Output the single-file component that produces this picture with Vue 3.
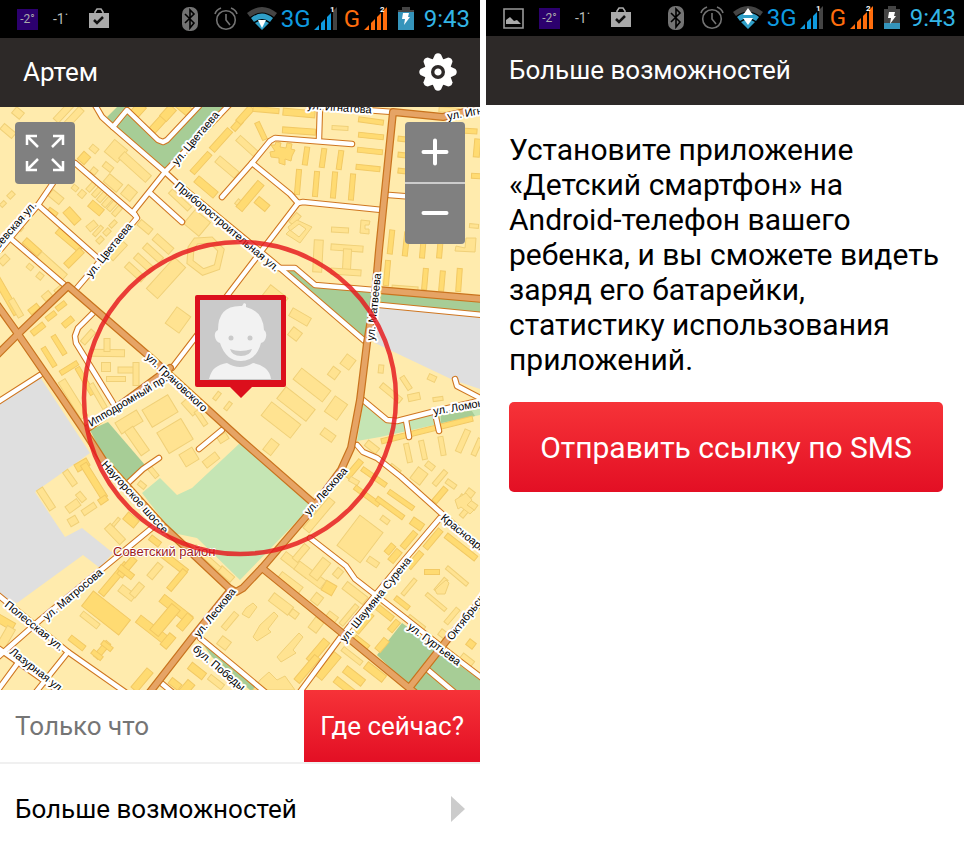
<template>
  <main class="screens">
    <section v-for="screen in screens" :key="screen.id" :id="screen.id" class="screen">
      <!-- status bar -->
      <div class="status" :class="{ tall: screen.id === 'map' }">
        <div class="notices">
          <span v-if="screen.id === 'more'" class="slot"><svg width="21" height="21" viewBox="0 0 21 21"><path d="M1 1h19v19H1z" fill="none" stroke="#999" stroke-width="1.600" /><path d="M3 16v-4l4-3 4 4 3-1 4 4z" fill="#aaa" /></svg></span>
          <span class="slot"><span class="temp">-2°</span></span>
          <span class="slot minus">-1˙</span>
          <span class="slot">
            <svg width="20" height="22" viewBox="0 0 20 22"><path d="M6 5V4l2-3h4l2 3v1" fill="none" stroke="#aaa" stroke-width="1.600" /><path d="M0 5h20v15H0z" fill="#aaa" /><path d="M5 12l3 3 6-6" fill="none" stroke="#111" stroke-width="2.500" /></svg>
          </span>
        </div>
        <div class="system">
          <svg width="16" height="24" viewBox="0 0 16 24"><rect width="16" height="24" rx="7" fill="#737373" /><path d="M3 7l9 9-4 5V3l4 4-9 9" fill="none" stroke="#000" stroke-width="1.600" /></svg>
          <svg class="alarm" width="24" height="24" viewBox="0 0 24 24" fill="none" stroke="#737373" stroke-width="1.600"><circle cx="12" cy="13" r="9.300" /><path d="M12 7v6l4 5M1 7q1-4 6-6M23 7q-1-4-6-6" /></svg>
          <svg class="wifi" width="30" height="24" viewBox="0 0 30 24">
            <path d="M0 6Q15-6 30 6l-3 4Q15 1 3 10z" fill="#444" />
            <path d="M4 11q11-9 22 0l-3 4q-8-6-16 0zM8 16q7-5 14 0l-7 7z" fill="#2f9fc8" />
            <path v-if="screen.id === 'more'" d="M15 2l5 7H10zM10 12h10l-5 7z" fill="#fff" />
            <path v-else d="M11 13h8l-4 8z" fill="#fff" />
          </svg>
          <span class="network blue">3G</span>
          <svg class="signal" width="24" height="24" viewBox="0 0 24 24"><path d="M0 23l5-5v5zM7 16l4-4v11H7zM13 10l4-4v17h-4z" fill="#0f9be0" /><path d="M19 4l4-4v23h-4z" fill="#444" /><text x="16" y="5">1</text></svg>
          <span class="network orange">G</span>
          <svg class="signal" width="24" height="24" viewBox="0 0 24 24"><path d="M0 23l5-5v5zM7 16l4-4v11H7zM13 10l4-4v17h-4zM19 4l4-4v23h-4z" fill="#ff6d0d" /><text x="16" y="5">2</text></svg>
          <svg class="battery" width="16" height="24" viewBox="0 0 16 24"><path d="M4 0h8v3h4v20H0V3h4z" fill="#444" /><path :d="screen.id === 'more' ? 'M0 17h16v6H0z' : 'M0 5h16v18H0z'" fill="#3594bb" /><path d="M5 6h6l-1 4h2l-6 8 1-6H4z" fill="#fff" /></svg>
          <time>9:43</time>
        </div>
      </div>

      <header class="title-bar">
        <h1>{{ screen.title }}</h1>
        <button v-if="screen.id === 'map'" class="gear" type="button" aria-label="Настройки">
          <svg width="38" height="38" viewBox="-19 -19 38 38">
            <g fill="#fff">
              <circle r="13.500" />
              <path v-for="n in 8" :key="n" d="M-6-11L-3-17.500Q0-20 3-17.500L6-11z" :transform="`rotate(${n * 45})`" />
            </g>
            <circle r="5.300" fill="#fff" stroke="#2d2928" stroke-width="3.400" />
          </svg>
        </button>
      </header>

      <!-- map screen -->
      <template v-if="screen.id === 'map'">
        <div class="map">
          <svg class="map-canvas" viewBox="0 107 480 583" preserveAspectRatio="xMidYMid slice">
            <rect y="107" width="480" height="583" fill="#ffebad" />
            <polygon v-for="(a, i) in areas" :key="'a' + i" :points="a[1]" :fill="a[0]" />
            <g stroke-width="1">
              <rect v-for="(b, i) in buildings" :key="'b' + i" :x="b[0] - b[2] / 2" :y="b[1] - b[3] / 2" :width="b[2]" :height="b[3]" :transform="`rotate(${b[4]} ${b[0]} ${b[1]})`" :fill="b[5] ? '#ffdb72' : '#ffe391'" :stroke="b[5] ? '#f2c964' : '#f0d078'" />
              <polygon v-for="(p, i) in blocks" :key="'p' + i" :points="p[1]" :fill="p[0] ? '#ffdb72' : '#ffe391'" :stroke="p[0] ? '#f2c964' : '#f0d078'" />
              <polygon points="196,241 211,240 221,250 217,267 203,272 190,262 191,248" fill="none" stroke="#f0d078" stroke-width="7" />
              <polygon points="196,241 211,240 221,250 217,267 203,272 190,262 191,248" fill="none" stroke="#ffe391" stroke-width="5" />
            </g>
            <g fill="none" stroke-linecap="round" stroke-linejoin="round">
              <polyline v-for="(r, i) in streets" :key="'s' + i" :points="r" stroke="#cf7620" stroke-width="6.500" />
              <polyline v-for="(r, i) in streets" :key="'w' + i" :points="r" stroke="#fff" stroke-width="4.400" />
              <polyline v-for="(r, i) in avenues" :key="'c' + i" :points="r" stroke="#c9731d" stroke-width="8" />
              <polyline v-for="(r, i) in avenues" :key="'o' + i" :points="r" stroke="#e6a465" stroke-width="5.600" />
            </g>
            <g class="street-names">
              <text v-for="(t, i) in labels" :key="'t' + i" :transform="`translate(${t[1]} ${t[2]}) rotate(${t[3]})`">{{ t[0] }}</text>
              <text class="district" x="113" y="556">Советский район</text>
            </g>
            <circle cx="240" cy="398" r="156" fill="none" stroke="#e6191e" stroke-opacity=".83" stroke-width="4.500" />
            <!-- child marker -->
            <path d="M197 295h87q2 0 2 2v88q0 2-2 2h-32l-11 11-11-11h-33q-2 0-2-2v-88q0-2 2-2z" fill="#dc0f1c" />
            <path d="M200 300h81v80h-81z" fill="#cacaca" />
            <path d="M209 379q2-8 6-11 5-4 12-5 13 8 26 0 7 1 12 5 5 4 6 11z" fill="#f2f2f2" />
            <path d="M218 330q0-24 22-24h2l2-3 2 1v3q17 4 18 23 3 2 2 7-1 5-5 6-5 18-20 18t-21-18q-4-1-5-6-1-5 3-7z" fill="#f2f2f2" />
            <circle cx="231" cy="338" r="2.500" fill="#cacaca" />
            <circle cx="250" cy="338" r="2.500" fill="#cacaca" />
            <path d="M230 349q10 4 22 0-2 7-11 7t-11-7z" fill="#cacaca" />
          </svg>
          <button class="map-button expand" type="button" aria-label="Во весь экран">
            <svg width="40" height="40" viewBox="0 0 40 40" fill="none" stroke="#fff" stroke-width="2.500"><path d="M2 12V3h10M3 4l10 10M28 3h10v9M37 4L27 14M2 28v9h10M3 36l10-10M28 37h10v-9M37 36L27 26" /></svg>
          </button>
          <div class="zoom">
            <button class="map-button" type="button" aria-label="Приблизить"><svg width="28" height="28" viewBox="0 0 28 28"><path d="M2.500 14h23M14 2.500v23" stroke="#fff" stroke-width="4" stroke-linecap="round" /></svg></button>
            <button class="map-button" type="button" aria-label="Отдалить"><svg width="28" height="28" viewBox="0 0 28 28"><path d="M2.500 13h23" stroke="#fff" stroke-width="4" stroke-linecap="round" /></svg></button>
          </div>
        </div>

        <div class="locate">
          <span>Только что</span>
          <button class="red" type="button">Где сейчас?</button>
        </div>
        <a class="more-link" href="#more">
          <span>Больше возможностей</span>
          <svg width="14" height="26" viewBox="0 0 14 26"><path d="M0 0l14 13L0 26z" fill="#ccc" /></svg>
        </a>
      </template>

      <!-- promo screen -->
      <div v-else class="promo">
        <p>Установите приложение «Детский смартфон» на Android-телефон вашего ребенка, и вы сможете видеть заряд его батарейки, статистику использования приложений.</p>
        <button class="red send" type="button">Отправить ссылку по SMS</button>
      </div>
    </section>
  </main>
</template>

<script setup>
const screens = [
  { id: 'map', title: 'Артем' },
  { id: 'more', title: 'Больше возможностей' },
]

const gray = '#dfdfdf'
const park = '#a7cd96'
const lawn = '#c5e5b4'

// parks, lawns and industrial zones
const areas = [
  [gray, '0,402 40,377 90,453 35,492 65,537 82,528 113,553 100,568 83,555 17,603 0,595'],
  [gray, '379,306 480,313 480,389 453,380 375,343'],
  [park, '107,117 117,107 127,107 127,112 163,142 197,107 223,107 165,169 113,127'],
  [park, '278,270 295,270 313,287 378,291 368,343'],
  [park, '377,291 480,301 480,313 379,305'],
  [lawn, '240,443 192,488 177,495 160,478 142,493 173,533 197,538 240,580 303,515 310,500'],
  [lawn, '363,403 390,422 440,412 480,402 480,415 380,437 357,441'],
  [park, '441,415 470,408 475,416 441,423'],
  [park, '108,422 145,465 125,483 105,460 90,430'],
  [park, '402,623 480,680 480,690 413,690 377,655'],
  [park, '200,640 240,671 263,690 250,690 212,657'],
]

// cx, cy, width, height, angle, dark
const buildings = [
  [18, 113, 10, 8, 40, 0], [8, 131, 15, 7, 40, 0], [64, 112, 24, 7, -47, 0], [72, 119, 28, 7, -47, 0],
  [116, 151, 17, 16, 40, 0], [135, 167, 36, 9, 42, 0], [84, 158, 10, 9, -48, 1], [94, 149, 8, 6, 40, 0],
  [108, 167, 10, 6, 38, 0], [94, 171, 6, 6, 40, 0], [113, 183, 17, 10, 40, 0], [129, 193, 12, 12, 40, 0],
  [11, 195, 7, 5, -45, 0], [3, 204, 6, 4, -45, 0], [56, 197, 14, 8, 40, 0], [82, 194, 6, 7, 40, 0],
  [75, 188, 6, 5, 40, 0], [52, 213, 10, 7, 35, 1], [72, 216, 17, 9, 48, 1], [96, 208, 15, 8, 40, 1],
  [91, 187, 10, 5, -48, 0], [97, 192, 11, 5, -48, 0], [102, 197, 11, 5, -48, 0], [107, 202, 11, 5, -48, 0], [112, 206, 11, 5, -48, 0], [117, 211, 11, 5, -48, 0],
  [92, 226, 10, 7, -40, 0], [98, 231, 12, 4, -48, 0], [113, 224, 8, 4, -45, 0], [107, 232, 7, 5, -45, 0], [100, 240, 7, 5, -45, 0],
  [31, 211, 6, 5, 40, 0], [24, 221, 6, 5, 40, 0], [20, 228, 6, 5, 40, 0], [4, 260, 10, 7, -45, 0],
  [32, 247, 20, 7, 42, 1], [52, 266, 34, 8, 42, 0], [69, 240, 30, 7, 40, 1], [74, 258, 22, 7, -45, 1],
  [30, 267, 6, 5, 40, 0], [40, 276, 6, 6, 40, 0], [6, 295, 44, 7, 60, 1], [47, 296, 9, 7, -40, 0],
  [60, 290, 10, 7, -40, 0], [145, 227, 15, 7, 40, 0], [118, 251, 21, 6, -47, 0], [163, 244, 22, 8, 42, 0],
  [153, 253, 22, 7, 42, 0], [144, 263, 22, 7, 42, 0], [135, 272, 22, 7, 42, 0], [166, 278, 42, 15, -48, 0],
  [180, 200, 26, 6, 43, 0], [197, 223, 20, 18, 40, 0], [201, 163, 26, 6, -48, 1], [221, 140, 27, 7, -48, 1],
  [227, 167, 25, 8, 40, 0], [206, 187, 25, 8, 40, 1], [237, 125, 12, 6, -48, 1], [240, 204, 9, 6, 40, 0],
  [138, 110, 14, 10, -48, 1], [159, 123, 20, 8, -48, 1], [168, 113, 15, 9, -48, 1], [184, 108, 15, 9, 40, 1],
  [245, 115, 20, 7, -48, 1], [266, 110, 26, 5, 5, 1], [299, 113, 32, 7, 5, 1], [299, 131, 33, 6, 4, 1],
  [340, 128, 16, 4, 3, 0], [261, 131, 19, 5, 65, 1], [247, 146, 24, 7, 42, 0], [371, 121, 25, 5, 8, 1],
  [371, 136, 25, 5, 6, 1], [370, 151, 25, 5, 6, 1], [368, 168, 24, 5, 6, 1], [306, 156, 18, 5, -82, 1],
  [323, 158, 19, 5, -82, 1], [340, 160, 19, 5, -82, 1], [298, 182, 25, 5, -85, 1], [316, 184, 25, 5, -85, 1],
  [334, 185, 26, 5, -85, 1], [352, 187, 26, 5, -85, 1], [402, 139, 8, 5, 6, 1], [402, 155, 8, 5, 6, 1], [402, 171, 8, 5, 6, 1],
  [250, 196, 34, 8, -50, 1], [262, 204, 14, 8, 40, 1], [340, 230, 17, 5, 3, 0], [295, 219, 12, 6, -50, 0],
  [318, 256, 9, 32, 3, 0], [347, 248, 32, 6, 4, 0], [347, 260, 8, 22, 3, 0], [346, 272, 30, 6, 4, 0],
  [391, 242, 24, 5, -84, 1], [406, 244, 24, 5, -84, 1], [423, 246, 24, 5, -85, 1], [440, 247, 22, 5, -85, 1],
  [387, 273, 25, 5, -85, 1], [425, 279, 21, 5, -85, 1], [442, 281, 20, 5, -85, 1], [459, 280, 23, 5, -86, 1],
  [405, 288, 26, 4, 4, 0], [469, 131, 16, 5, 4, 1], [477, 148, 6, 18, 5, 1], [476, 176, 9, 5, 3, 1], [474, 226, 9, 4, 5, 0],
  [449, 110, 20, 5, 5, 0], [275, 297, 22, 14, 38, 0],
  [16, 308, 20, 6, 60, 0], [34, 309, 11, 6, -38, 1], [51, 316, 11, 5, -38, 1], [38, 329, 15, 6, -38, 1],
  [61, 306, 11, 5, -38, 1], [68, 322, 12, 6, -40, 1], [88, 337, 16, 6, -48, 0], [49, 357, 22, 5, 58, 1],
  [59, 345, 22, 5, 58, 1], [69, 368, 20, 5, -32, 1], [85, 381, 31, 5, 60, 1], [73, 399, 43, 8, 58, 0],
  [98, 396, 28, 5, 60, 0], [108, 353, 33, 7, 1, 0], [107, 345, 6, 13, 0, 0], [106, 367, 9, 9, 0, 0],
  [128, 370, 20, 6, 0, 0], [136, 374, 6, 23, 0, 0], [116, 379, 19, 5, 0, 0], [178, 320, 17, 20, 36, 0],
  [160, 411, 30, 20, -31, 0], [175, 436, 28, 24, -31, 0], [189, 457, 15, 14, -31, 0], [190, 407, 17, 8, 48, 0],
  [217, 396, 9, 4, -52, 0], [228, 406, 9, 4, -52, 0], [201, 418, 17, 5, 56, 0], [211, 460, 16, 8, -38, 0], [223, 438, 10, 7, -32, 0],
  [129, 422, 25, 13, -31, 0], [137, 441, 29, 10, 55, 0], [153, 472, 13, 5, 50, 0], [142, 485, 8, 5, 40, 0],
  [82, 465, 14, 8, -30, 1], [94, 481, 40, 7, 58, 1], [70, 478, 17, 6, 55, 0], [46, 499, 24, 7, 57, 0],
  [81, 497, 10, 6, 50, 0], [73, 506, 14, 8, -36, 0], [89, 509, 15, 6, -34, 0], [73, 521, 9, 8, -30, 0],
  [103, 500, 9, 6, -34, 1], [131, 520, 14, 9, 40, 1], [115, 534, 22, 8, 46, 0], [116, 522, 10, 3, -50, 0],
  [300, 317, 21, 9, 30, 0], [295, 334, 11, 10, 38, 0], [312, 385, 37, 14, 38, 0], [296, 404, 37, 15, 38, 0],
  [281, 420, 37, 17, 38, 0], [348, 362, 11, 12, 37, 0], [334, 373, 9, 10, 37, 0], [336, 408, 15, 19, 35, 0],
  [328, 435, 14, 8, 36, 0], [271, 447, 10, 14, 38, 0], [381, 369, 5, 8, 6, 0], [406, 383, 15, 5, 57, 0],
  [391, 393, 25, 6, 39, 0], [414, 397, 12, 7, -12, 0], [432, 378, 8, 6, 25, 0], [438, 399, 10, 4, -8, 0],
  [427, 430, 94, 5, -14, 1], [408, 453, 19, 5, 78, 0], [423, 450, 19, 5, 78, 0],
  [442, 446, 19, 5, 80, 0], [463, 441, 24, 6, -66, 0], [477, 447, 18, 5, -66, 0], [372, 447, 14, 7, 38, 0],
  [374, 477, 29, 5, 35, 1], [354, 469, 22, 6, -50, 1], [354, 481, 10, 5, 30, 0], [419, 476, 12, 14, 37, 0],
  [430, 466, 9, 6, 38, 0], [440, 478, 18, 5, -50, 0], [451, 484, 11, 5, 36, 0], [440, 495, 18, 6, -50, 1],
  [395, 469, 12, 5, 38, 0], [401, 500, 30, 5, 35, 1], [367, 496, 30, 5, 36, 1], [390, 508, 33, 5, 36, 1],
  [470, 493, 8, 7, 38, 0], [468, 502, 20, 6, 36, 0], [465, 512, 12, 5, -50, 0],
  [319, 515, 40, 8, -50, 0], [360, 539, 29, 38, 37, 0], [385, 520, 9, 5, 37, 0], [417, 524, 13, 8, 35, 1],
  [390, 549, 11, 6, -50, 1], [395, 556, 14, 7, -50, 1], [373, 562, 12, 6, 35, 0], [409, 540, 20, 6, -50, 1],
  [433, 539, 24, 6, -50, 1], [415, 560, 20, 6, -50, 1], [432, 572, 15, 5, 0, 1], [457, 576, 27, 4, 40, 0],
  [409, 587, 20, 4, -50, 0], [436, 602, 25, 4, 40, 0], [441, 585, 16, 5, -50, 0], [461, 547, 38, 6, 38, 1],
  [329, 588, 12, 11, 30, 1], [338, 573, 9, 7, -50, 0], [355, 593, 26, 9, 38, 0], [317, 599, 9, 10, 38, 0],
  [296, 565, 32, 9, 38, 0], [310, 575, 33, 10, 37, 0], [320, 569, 10, 22, 38, 0], [301, 553, 19, 7, -50, 0],
  [290, 583, 26, 9, 37, 0], [281, 604, 24, 10, 37, 0], [294, 614, 8, 7, 37, 0], [316, 625, 10, 13, 37, 0],
  [332, 617, 11, 7, 37, 0], [349, 615, 25, 5, -50, 0], [364, 623, 24, 6, -50, 1], [361, 643, 17, 7, 38, 1],
  [382, 645, 14, 7, -50, 1], [394, 626, 13, 6, -50, 1], [402, 603, 17, 5, 38, 1], [385, 613, 19, 6, 38, 1],
  [416, 623, 20, 6, 38, 0], [452, 616, 19, 5, -50, 0], [443, 634, 8, 7, 38, 0], [471, 644, 8, 7, 38, 1],
  [467, 660, 14, 7, 38, 0], [318, 651, 27, 8, -50, 1], [307, 669, 32, 7, -50, 1], [328, 666, 30, 9, -50, 1],
  [354, 676, 23, 8, 38, 1], [375, 672, 23, 8, 38, 1], [344, 686, 22, 7, 38, 1], [352, 656, 24, 5, 38, 0],
  [106, 613, 47, 19, 38, 1], [90, 620, 21, 6, 38, 0], [114, 579, 40, 7, -50, 1], [127, 567, 23, 7, -50, 1],
  [126, 572, 17, 6, 38, 1], [127, 593, 17, 8, 38, 0], [137, 590, 15, 7, -50, 0], [155, 571, 17, 7, -50, 0],
  [173, 562, 34, 7, 38, 1], [177, 580, 25, 6, -50, 1], [155, 541, 12, 6, 38, 1],
  [154, 631, 40, 9, 38, 1], [176, 609, 36, 9, 38, 1], [165, 620, 34, 11, -50, 1], [185, 622, 17, 8, -50, 1],
  [168, 641, 15, 8, -50, 1], [77, 643, 18, 6, 38, 1], [102, 650, 20, 6, -50, 1], [97, 655, 12, 5, 38, 1],
  [107, 646, 12, 5, 38, 1], [142, 680, 25, 8, -50, 1], [230, 621, 20, 6, -50, 0], [224, 643, 11, 10, 38, 0],
  [197, 671, 18, 8, 38, 1], [216, 682, 17, 6, 38, 0], [175, 684, 12, 7, 38, 1], [185, 690, 20, 9, -50, 1],
  [5, 622, 20, 8, 30, 1], [5, 639, 26, 9, -60, 0], [226, 574, 17, 7, 42, 0], [207, 558, 34, 5, 42, 0],
]

const blocks = [
  [1, '271,145 275,145 276,142 281,143 280,147 286,148 287,143 292,144 291,149 295,150 292,156 291,161 285,159 285,165 279,163 279,158 271,157 270,152 275,151'],
  [0, '288,227 297,220 312,227 300,243 286,234 290,230 299,237 306,229 299,224 290,231'],
  [0, '361,220 370,221 369,225 365,225 365,229 369,229 369,234 360,233'],
  [0, '456,246 465,248 466,238 476,238 475,252 455,251'],
  [0, '246,608 253,603 257,607 249,618 242,614'],
  [0, '260,625 274,612 278,616 268,629 271,632 257,641 253,637'],
  [0, '285,648 299,633 303,637 293,650 296,653 281,662 277,657'],
  [0, '260,680 269,672 277,680 285,676 295,690 253,690'],
  [0, '455,500 466,493 472,500 467,505 474,510 470,514 461,507 458,509'],
  [0, '435,590 440,585 446,580 449,583 445,594 437,594'],
]

const streets = [
  '95,105 102,117 113,127 165,172 177,183 273,262 323,305 367,343',
  '229,105 165,172 133,212 137,218 77,288',
  '75,163 135,215',
  '53,183 38,205 0,250',
  '38,205 100,260',
  '10,238 67,287',
  '150,193 182,222',
  '113,127 127,110 158,140 163,142 167,140 199,106',
  '222,197 252,163 270,141 275,138 352,144',
  '319,139 320,106',
  '252,163 290,194 298,203 303,202 382,210',
  '298,203 172,368',
  '389,195 415,197',
  '277,268 295,268 315,285 374,290',
  '380,305 482,315',
  '310,106 393,112',
  '363,400 387,420 397,421 440,410 482,400',
  '406,420 409,437',
  '435,413 439,431',
  '455,379 457,386 482,399',
  '357,445 363,452 377,458 401,477 440,512 482,550',
  '93,313 78,328 75,336 76,343 113,403',
  '40,375 -2,402',
  '222,430 199,449',
  '159,458 143,469 128,483',
  '153,527 113,560 40,620 -2,657',
  '-2,595 68,652 125,692',
  '-2,648 60,692',
  '68,652 36,692',
  '20,660 -2,690',
  '200,638 240,671 265,692',
  '160,682 172,692',
  '440,518 400,565 340,638 300,692',
  '310,538 346,566 355,579 400,614 457,659 482,678',
  '428,670 454,692',
]

const avenues = [
  '88,428 120,405 170,368',
  '-2,354 18,334 68,286 150,357 240,439 312,502',
  '-2,306 18,334 60,395 85,432 103,460 163,526 229,588 236,592 243,588 262,568 310,512 341,470 351,448 360,400 367,343 375,295 379,250 393,112 443,117 482,108',
  '262,568 347,637 414,692',
  '410,687 447,640 482,600',
  '229,592 192,638 150,692',
  '378,290 482,299',
]

// name, x, y, angle
const labels = [
  ['ул. Игнатова', 307, 109, 4],
  ['ул. Игнатова', 448, 120, -10],
  ['ул. Цветаева', 177, 166, -50],
  ['ул. Цветаева', 91, 278, -51],
  ['Авдеевская ул.', -14, 264, -49],
  ['Приборостроительная ул.', 174, 187, 40],
  ['ул. Матвеева', 374, 341, -84],
  ['ул. Грановского', 145, 358, 43],
  ['Ипподромный пр.', 91, 427, -31],
  ['Наугорское шоссе', 101, 465, 48],
  ['ул. Лескова', 309, 516, -49],
  ['ул. Лескова', 199, 638, -51],
  ['ул. Ломоносова', 434, 415, -10],
  ['Красноармейская ул.', 440, 519, 39],
  ['ул. Шаумяна Сурена', 345, 643, -51],
  ['ул. Гуртьева', 407, 628, 37],
  ['Октябрьская ул.', 452, 641, -52],
  ['ул. Матросова', 47, 621, -40],
  ['Полесская ул.', 4, 606, 39],
  ['Лазурная ул.', 9, 653, 38],
  ['бул. Победы', 192, 650, 40],
]
</script>

<style>
body {
  margin: 0;
  background: #fff;
}
</style>

<style scoped>
.screens {
  display: grid;
  grid-template-columns: 240fr 239fr;
  gap: 6px;
  align-items: start;
  font-family: Roboto, "Liberation Sans", sans-serif;
  color: #000;
}

.screen {
  min-width: 0;
}

button {
  border: 0;
  padding: 0;
  font: inherit;
  color: #fff;
  cursor: pointer;
}

svg {
  display: block;
  flex: none;
}

.status {
  display: flex;
  justify-content: space-between;
  align-items: center;
  height: 36px;
  padding: 0 8px 0 17px;
  background: #000;
}

.status.tall {
  height: 38px;
  padding-right: 10px;
}

.notices,
.system {
  display: flex;
  align-items: center;
}

.slot {
  display: flex;
  width: 36px;
}

.temp {
  width: 21px;
  line-height: 21px;
  background: #2c006e;
  color: #aaa;
  font-size: 12px;
  text-align: center;
}

.minus {
  color: #bbb;
  font-size: 14px;
}

.alarm {
  margin-left: 16px;
}

.wifi {
  margin: 0 4px 0 9px;
}

.network {
  font-size: 24px;
  line-height: 30px;
}

.blue {
  width: 30px;
  color: #0f9be0;
}

.orange {
  width: 17px;
  margin-left: 6px;
  color: #ff6d0d;
}

.signal {
  margin-left: 3px;
  overflow: visible;
  fill: #fff;
  font-size: 8px;
  font-weight: 700;
}

.battery {
  margin: 0 10px;
}

time {
  color: #33b5e5;
  font-size: 24px;
}

.title-bar {
  display: flex;
  justify-content: space-between;
  align-items: center;
  box-sizing: border-box;
  height: 69px;
  padding: 0 23px 2px;
  background: #2d2928;
}

h1 {
  margin: 0;
  color: #fff;
  font-size: 26px;
  font-weight: 400;
}

.gear {
  background: none;
}

.map {
  position: relative;
  aspect-ratio: 480 / 583;
  overflow: hidden;
}

.map-canvas {
  width: 100%;
  height: 100%;
}

.street-names {
  font-family: "Liberation Sans", sans-serif;
  font-size: 11px;
  fill: #000;
  stroke: #fff;
  stroke-width: 4px;
  stroke-linejoin: round;
  paint-order: stroke;
}

.district {
  font-size: 13px;
  fill: #9c1c1c;
  stroke-width: 2px;
}

.map-button {
  display: flex;
  align-items: center;
  justify-content: center;
  width: 60px;
  height: 60px;
  background: #808080;
}

.expand {
  position: absolute;
  top: 15px;
  left: 15px;
  height: 62px;
  border-radius: 4px;
}

.zoom {
  position: absolute;
  top: 15px;
  right: 15px;
  display: grid;
  gap: 2px;
  overflow: hidden;
  border-radius: 4px;
  background: #ccc;
}

.red {
  background: linear-gradient(#f63338, #e30f24);
}

.locate {
  display: flex;
  justify-content: space-between;
  align-items: stretch;
  height: 72px;
  border-bottom: 2px solid #f0f0f0;
  font-size: 26px;
}

.locate span {
  align-self: center;
  padding-left: 15px;
  color: #757575;
}

.locate .red {
  padding: 0 16px;
}

.more-link {
  display: flex;
  align-items: center;
  justify-content: space-between;
  height: 90px;
  padding: 0 15px;
  color: #000;
  font-size: 26px;
  text-decoration: none;
}

.promo {
  padding: 27px 21px 27px 23px;
}

.promo p {
  margin: 0 0 25px;
  font-size: 30px;
  line-height: 35px;
}

.send {
  width: 100%;
  height: 90px;
  border-radius: 5px;
  font-size: 30px;
}
</style>
